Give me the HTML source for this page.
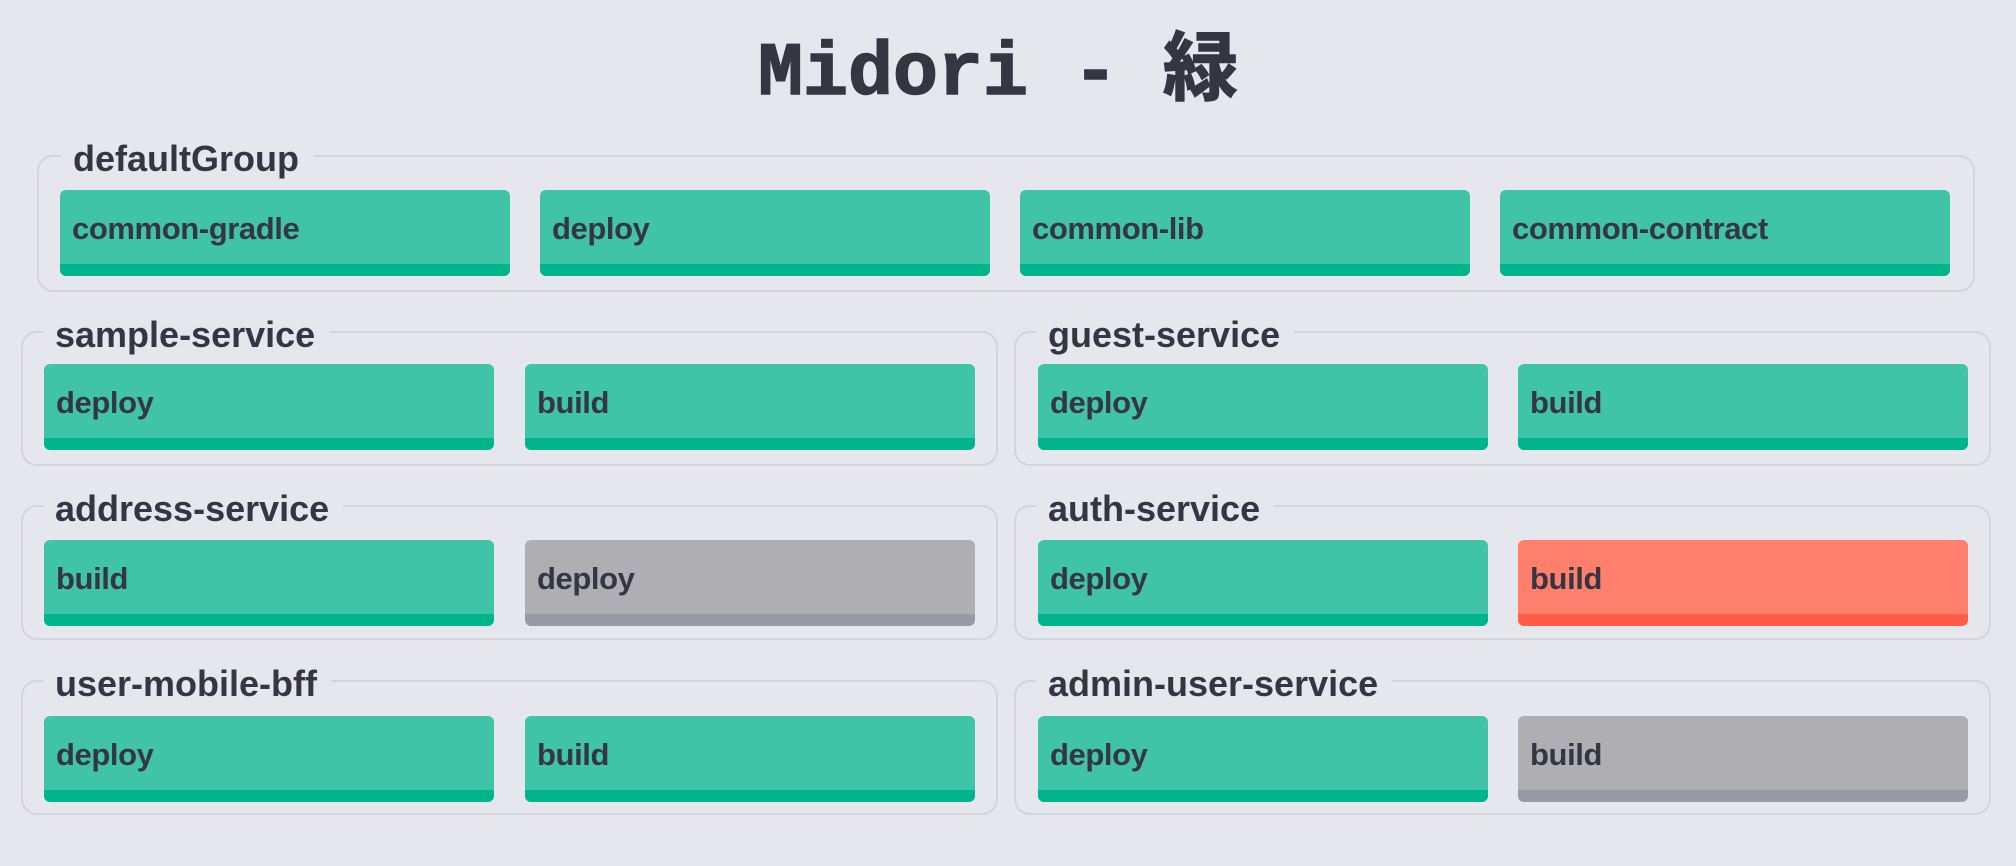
<!DOCTYPE html>
<html><head><meta charset="utf-8"><style>
*{box-sizing:border-box;margin:0;padding:0}
body{width:2016px;height:866px;background:#e6e7ec;position:relative;overflow:hidden;font-family:"Liberation Sans","Noto Sans CJK JP",sans-serif;color:#363643}
h1{position:absolute;left:-10px;width:2016px;top:33px;text-align:center;font-family:"Liberation Mono","Noto Sans CJK JP",monospace;font-weight:bold;font-size:75px;line-height:84px;color:#363643;-webkit-text-stroke:1.5px #363643}
.fs{position:absolute;border:2px solid #d4d5da;border-radius:16px;height:135px}
.lg{position:absolute;top:-18px;left:20px;padding:0 14px 0 12px;background:#e6e7ec;font-weight:bold;font-size:36px;line-height:40px;letter-spacing:0}
.b{position:absolute;top:31px;height:86px;width:450px;border-radius:6px;background:#3fc4a8;border-bottom:12px solid #00b48e;font-weight:bold;font-size:31px;line-height:78px;padding-left:12px;letter-spacing:-0.4px}
.r{background:#fe7f6c;border-bottom-color:#ff5d45}
.g{background:#aeaeb3;border-bottom-color:#9a9ba2}
</style></head><body>
<h1>Midori - 緑</h1>

<div class="fs" style="left:37px;top:155px;width:1938px;height:137px">
<div class="lg" style="left:22px">defaultGroup</div>
<div class="b" style="left:21px;top:33px">common-gradle</div>
<div class="b" style="left:501px;top:33px">deploy</div>
<div class="b" style="left:981px;top:33px">common-lib</div>
<div class="b" style="left:1461px;top:33px">common-contract</div>
</div>

<div class="fs" style="left:21px;top:331px;width:977px">
<div class="lg">sample-service</div>
<div class="b" style="left:21px">deploy</div>
<div class="b" style="left:502px">build</div>
</div>
<div class="fs" style="left:1014px;top:331px;width:977px">
<div class="lg">guest-service</div>
<div class="b" style="left:22px">deploy</div>
<div class="b" style="left:502px">build</div>
</div>

<div class="fs" style="left:21px;top:505px;width:977px">
<div class="lg">address-service</div>
<div class="b" style="left:21px;top:33px">build</div>
<div class="b g" style="left:502px;top:33px">deploy</div>
</div>
<div class="fs" style="left:1014px;top:505px;width:977px">
<div class="lg">auth-service</div>
<div class="b" style="left:22px;top:33px">deploy</div>
<div class="b r" style="left:502px;top:33px">build</div>
</div>

<div class="fs" style="left:21px;top:680px;width:977px">
<div class="lg">user-mobile-bff</div>
<div class="b" style="left:21px;top:34px">deploy</div>
<div class="b" style="left:502px;top:34px">build</div>
</div>
<div class="fs" style="left:1014px;top:680px;width:977px">
<div class="lg">admin-user-service</div>
<div class="b" style="left:22px;top:34px">deploy</div>
<div class="b g" style="left:502px;top:34px">build</div>
</div>
</body></html>
